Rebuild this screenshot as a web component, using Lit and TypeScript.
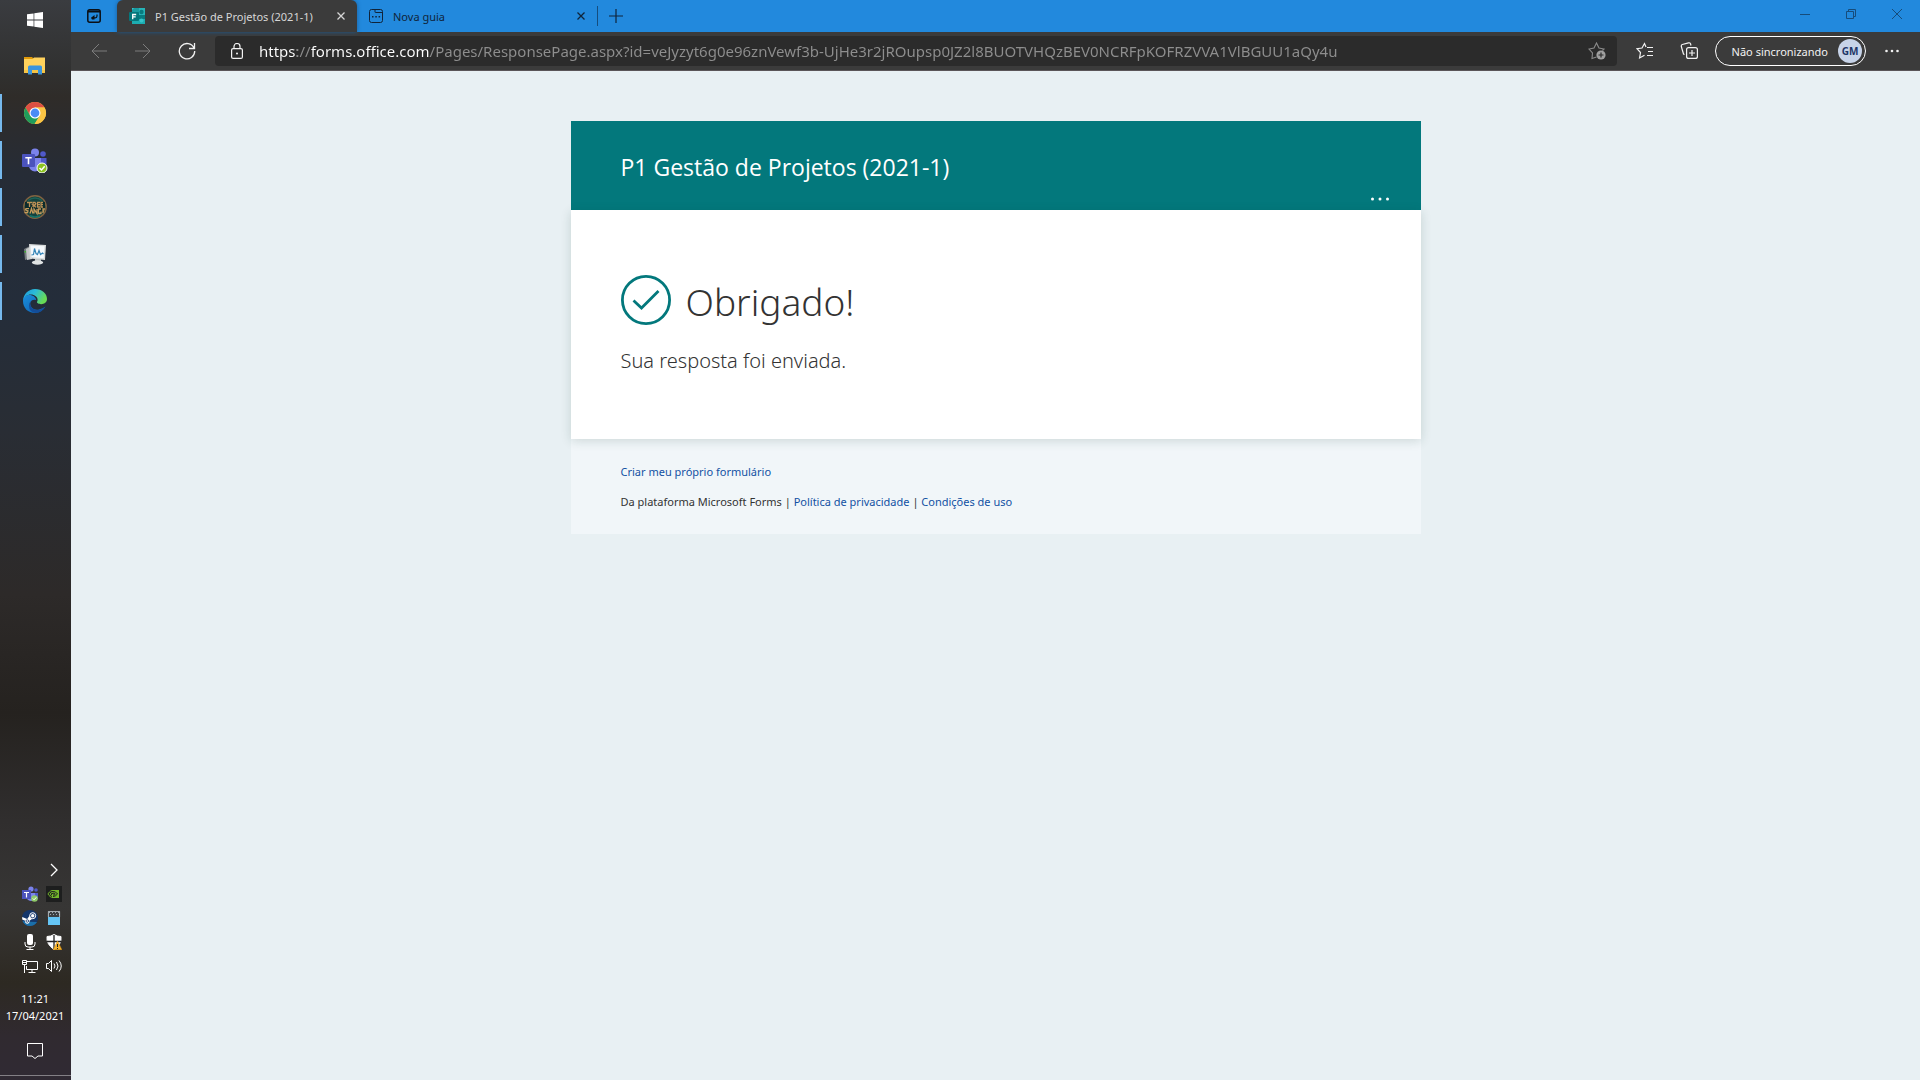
import { LitElement, html, css, svg } from "lit";
import { customElement, state } from "lit/decorators.js";
import { classMap } from "lit/directives/class-map.js";

const URL_TEXT =
  "https://forms.office.com/Pages/ResponsePage.aspx?id=veJyzyt6g0e96znVewf3b-UjHe3r2jROupsp0JZ2l8BUOTVHQzBEV0NCRFpKOFRZVVA1VlBGUU1aQy4u";

const icon = (size: number, body: unknown, width = size) =>
  html`<svg width=${width} height=${size} viewBox="0 0 ${width} ${size}" aria-hidden="true" fill="none" stroke="currentColor">${body}</svg>`;

const resets = css`
  * {
    box-sizing: border-box;
  }
  button {
    font: inherit;
    color: inherit;
    background: none;
    border: 0;
    padding: 0;
    display: flex;
    align-items: center;
    justify-content: center;
    flex: none;
  }
  svg {
    display: block;
    flex: none;
  }
`;

const icons = {
  start: icon(16, svg`<path stroke="none" fill="#fff" d="M0 2.300 6.600 1.400v6.200H0zM7.300 1.300 16 0v7.600H7.300zM0 8.400h6.600v6.200L0 13.700zM7.300 8.400H16V16l-8.700-1.300z"/>`),
  explorer: icon(22, svg`<g stroke="none"><path fill="#e09a0a" d="M0 2h8l2 2H0z"/><path fill="#ffd25c" d="M0 4h8.500l1.500-1.500H21V18H0z"/><path fill="#f6c445" d="M0 15h21v3H0z"/><path fill="#3b94dc" d="M4 12q0-1.500 1.500-1.500h11q1.500 0 1.500 1.500v7.500h-4V15H8v4.500H4z"/></g>`),
  chrome: icon(24, svg`<g stroke="none"><circle cx="12" cy="12" r="11" fill="#fbc544"/><path fill="#dd4f43" d="M2.470 6.500A11 11 0 0 1 21.530 6.500H12L7.240 14.750z"/><path fill="#1f9d5b" d="M2.470 6.500A11 11 0 0 0 11.600 23L16.760 14.750 12 17.500 7.240 14.750z"/><path fill="#fbc544" d="M21.530 6.500A11 11 0 0 1 11.600 23L16.760 14.750 12 6.500z"/><circle cx="12" cy="12" r="5.500" fill="#fff"/><circle cx="12" cy="12" r="4.400" fill="#4b8bf5"/></g>`),
  teams: icon(26, svg`<g stroke="none"><circle cx="21" cy="7" r="2.800" fill="#5059c9"/><path fill="#5059c9" d="M17 11h7.500v6.500a4 4 0 0 1-7.500 1z"/><circle cx="13" cy="5.600" r="4" fill="#7b83eb"/><path fill="#7b83eb" d="M7 11h12v7.500a6 6 0 0 1-12 0z"/><rect x="0" y="7" width="13" height="13" rx="1" fill="#4b53bc"/><path d="M3.300 10.700h6.400M6.500 10.700v6.500" stroke="#fff" stroke-width="1.600"/><circle cx="20" cy="21" r="5" fill="#8bc220" stroke="#fff" stroke-width="1"/><path d="m17.500 21 2 2 3.200-3.800" stroke="#fff" stroke-width="1.500" fill="none"/></g>`),
  game: icon(24, svg`<circle cx="12" cy="12" r="11.200" fill="#15423e" stroke="#806341" stroke-width="1.400"/><path d="M5 5.500q7-5 14 0" stroke="#1f6359" stroke-width="1.500"/><path fill="#0c2b2b" stroke="none" d="M2 7h20v10H2z"/><path stroke="#bd9257" stroke-width="1.300" d="M4 7.500h5M6.500 7.500V12M10 12V7.500h2l.8 1.300L12 10h-2l3 2.200M17 7.500h-2.500V12H17M14.500 9.700H17M20 7.500h-2V12h2M18 9.700h2"/><path stroke="#c59b5c" stroke-width="1.300" d="M1.500 17.500h3l.5-1.500-2.500-1 .5-1.300h3M7 18.500l1.500-5 1.500 5M11 18.500V14l3 4.500V14M18 14h-2.500v4.500H18v-2M22 14h-2v4M20 16h1.500"/><path stroke="#16736a" stroke-width="1.500" d="M7 20.800q5 2.200 10 0"/>`),
  monitor: icon(24, svg`<g stroke="none"><path fill="#777d80" d="m1 7 6-3 1 12-6 2z"/><path fill="#c4c8c8" d="m3 7 6-3v13l-5 1z"/><path fill="#3cb22c" d="M1.500 9H3v1.500H1.500z"/><path fill="#d9dcdc" d="m6 2 17 1-1 15-15-1.500z"/><path fill="#f5f9fc" d="m7.500 3.500 14 .8-.8 12-12.200-1.200z"/><path fill="#bfc5c5" d="M12 17h6v3h-6z"/><ellipse cx="14.500" cy="20.500" rx="5.700" ry="2.200" fill="#e0e3e3"/></g><path d="m8.500 13 2-.5 1-6 1.500 5 1.500 1 1.500-4 1.500 4 2-1.500 1 1" stroke="#3686b8" stroke-width="1.200"/>`),
  edge: icon(24, svg`<defs><linearGradient id="ea" x1="0" y1="0" x2="1" y2=".4"><stop stop-color="#1c96db"/><stop offset=".5" stop-color="#2bbbd8"/><stop offset="1" stop-color="#68dc55"/></linearGradient><linearGradient id="eb" x1="0" y1="0" x2="1" y2="1"><stop stop-color="#198edc"/><stop offset="1" stop-color="#0f5cad"/></linearGradient></defs><g stroke="none"><path fill="url(#eb)" d="M0 12C0 7 5 5 9 6.500q4 1.500 4 4.500-4-1-5.500 2c-1.500 3.500 2 9 8.500 7.500q4-1 6.500-3Q18.500 24 12 24C5 24 0 19 0 12z"/><path fill="#134d99" d="M8.500 11.500C5 15 9 21.500 15.500 21q4-.5 6.500-3-3 5.500-9 6Q6 23.500 6 16.500q0-3 2.500-5z"/><path fill="url(#ea)" d="M0 11.500C.5 5 5.500 0 12 0c7 0 12 4.500 12 10 0 5-6.500 6.500-9.500 4-1.200-1-.2-1.400.1-2.600C15 8 11.500 5.500 8 5.500c-4 0-7 2.300-8 6z"/></g>`),
  chevron: icon(14, svg`<path d="m4 1 6 6-6 6" stroke-width="1.300"/>`),
  trayTeams: icon(16, svg`<g stroke="none"><circle cx="14" cy="4" r="1.800" fill="#5059c9"/><path fill="#5059c9" d="M11 7h5v6h-4z"/><circle cx="9" cy="3" r="2.600" fill="#7b83eb"/><path fill="#7b83eb" d="M5 7h8v6q-4 4-8 0z"/><rect y="4" width="9" height="9" fill="#4b53bc"/><path d="M2 6.500h5M4.500 6.500v5" stroke="#fff" stroke-width="1.200"/><circle cx="12.500" cy="12.500" r="3.300" fill="#8fc96a"/><path d="m10.800 12.500 1.300 1.300 2.200-2.500" stroke="#fff" fill="none"/></g>`),
  nvidia: icon(16, svg`<rect width="16" height="16" fill="#1d1e1e" stroke="none"/><path fill="#74b72b" stroke="none" d="M6 4h7v8H6z"/><path stroke="#74b72b" d="M6 4.500C4 5 2.500 7 2 8c1 2 3 3.500 5 3.500M6 6.500Q4.500 7 4 8.200 5.500 10 7 10"/><path stroke="#1d1e1e" d="M6 5.500q4-.5 5.500 2.500Q9.500 10.500 7 10.500M6 7.500q2-.8 3.300.7Q8.500 9.300 7 9"/>`),
  steam: icon(16, svg`<circle cx="8" cy="8" r="8" fill="#14366b" stroke="none"/><path fill="#1b6fa9" stroke="none" d="M.500 11q7 1 14.500 1-2.500 4-7 4-5.500 0-7.500-5z"/><path fill="#fff" stroke="none" d="m.2 7 5 2 2.500-3.500 3 3-3.200 2.300a2.300 2.300 0 1 1-4.400 0L.2 9.500z"/><circle cx="10.700" cy="5.700" r="3" fill="#14366b" stroke="#fff" stroke-width="1"/><circle cx="10.700" cy="5.700" r="1.700" fill="#fff" stroke="none"/><circle cx="5.300" cy="11" r="1.300" fill="none" stroke="#14366b" stroke-width=".8"/>`),
  device: icon(14, svg`<g stroke="none"><path fill="#3c4043" d="M1 0h12v6H1z"/><path fill="#65c5f5" d="M1 6h12v8H1z"/></g><path stroke="#9aa7ad" stroke-dasharray="1 2" d="M2 1.500h11M3 3.500h10"/><path stroke="#cfd8dc" stroke-width=".8" d="M1.400 6V.4h11.200V6"/>`),
  mic: icon(16, svg`<rect x="5" y="0" width="6" height="11" rx="2" fill="#fff" stroke="none"/><path d="M3 8v2q0 3 3 3h4q3 0 3-3V8M8 13v2.500M4.500 15.500h7"/>`),
  shield: icon(16, svg`<path fill="#fff" stroke="#fff" d="M8 .5Q5 2.500 1 2.500 0 10 8 15.500 16 10 15 2.500 11 2.500 8 .5z"/><path d="M8 1v14M1 7.500h14" stroke="#222" stroke-width="1.300"/><path fill="#f7b52c" stroke="#e4940d" stroke-width=".5" d="m11.500 7 4.300 8.700H7.200z"/><path d="M11.500 10v3M11.500 14v1" stroke="#222"/>`),
  network: icon(16, svg`<path d="M5 3.500h10.500v8H4.500V8M10 11.500v3M6.500 14.500h7M2.500 8v7M.5 2.500h4v4h-4zM2.500 6.500V8M1 4.500h3"/>`),
  sound: icon(16, svg`<path d="M.5 5.500h2l3-3v11l-3-3h-2zM8 5.500q2 2.500 0 5M10.500 4q3 4 0 8M13 2.500q4.500 5.500 0 11"/>`),
  notice: icon(16, svg`<path d="M.5.500h15V13H11l-3 2.500L5 13H.5z"/>`),
  tabActions: icon(14, svg`<rect x=".8" y=".8" width="12.400" height="12.400" rx="2" stroke-width="1.500"/><path d="M1 2.500h12" stroke-width="2"/><path d="M10 5.500V7q0 1.800-1.800 1.800H5.500" stroke-width="1.200"/><path d="M4 8.800 7.500 6v4.500H5z" fill="currentColor" stroke="none"/>`),
  forms: icon(16, svg`<g stroke="none"><path fill="#37c6d0" d="M3 0h10v6H3z"/><path fill="#1a9ba1" d="M5 0h6v5H3V2z"/><path fill="#27b4b8" d="M10 0h6v7h-6z"/><circle cx="12.500" cy="4" r="2.200" fill="#087c80"/><path fill="#087c80" d="M9 7h7v4H9z"/><path fill="#1cadb1" d="M3 11h13v5H3z"/><circle cx="12.500" cy="12.500" r="2" fill="#36c4ca"/><rect y="4" width="10" height="9" rx="1" fill="#05777c"/><path d="M3.700 11.300V6.500h3.500M3.700 8.800h3" stroke="#fff" stroke-width="1.300"/></g>`),
  page: icon(14, svg`<rect x=".5" y=".5" width="13" height="13" rx="2"/><path d="M6 .5V3q0 .5.500.5h7"/><path stroke-width="1.500" d="M3 7.800h1.500M6.300 7.800h1.500M9.600 7.800h1.500"/>`),
  close: icon(8, svg`<path d="m.5.500 7 7m0-7-7 7" stroke-width="1.300"/>`),
  plus: icon(14, svg`<path d="M7 0v14M0 7h14" stroke-width="1.200"/>`),
  minimize: icon(10, svg`<path d="M0 5.500h10"/>`),
  restore: icon(10, svg`<path d="M.5 2.500h7v7h-7zM2.500 2.500v-2h7v7h-2"/>`),
  quit: icon(10, svg`<path d="m0 0 10 10M10 0 0 10"/>`),
  back: icon(16, svg`<path d="M16 8H1M8 1 1 8l7 7"/>`),
  forward: icon(16, svg`<path d="M0 8h15M8 1l7 7-7 7"/>`),
  reload: icon(18, svg`<path d="M16 6A7.700 7.700 0 1 0 16.700 9M16.500 1v5.500H11" stroke-width="1.300"/>`),
  lock: icon(16, svg`<rect x=".6" y="5.600" width="10.800" height="9.800" rx="1.500" stroke-width="1.200"/><path d="M3 5.500V3.500a3 3 0 0 1 6 0v2" stroke-width="1.200"/><circle cx="6" cy="10.500" r="1" fill="currentColor" stroke="none"/>`, 12),
  starAdd: icon(18, svg`<path d="M8.500 15 4 16.500l.5-5.500L1 7l5-1L8.500 1 11 6l5 1-1.500 1.500" stroke-width="1.100"/><circle cx="13" cy="13" r="4.600" fill="#a0a0a0" stroke="none"/><path stroke="#2b2b2b" stroke-width="1.200" d="M13 10.500v5M10.500 13h5"/>`),
  favorites: icon(18, svg`<path d="M11 5.500h6M12 9.500h5M11 13.500h6M10 5 8.500 1.500 6 6 1 6.700l3.500 3.800L3.600 16l4.900-2.700" stroke-width="1.200"/>`),
  collections: icon(18, svg`<rect x="6.600" y="5.600" width="10.800" height="10.800" rx="2" stroke-width="1.200"/><path d="M12 8v6M9 11h6" stroke-width="1.200"/><path d="m4.500 12.500-1-.5L1.300 4.500Q1 3 2.300 2.500L8.500.8q1.500-.3 2 1l.5 1.700" stroke-width="1.200"/>`),
  more: icon(14, svg`<g stroke="none" fill="currentColor"><circle cx="1.500" cy="7" r="1.300"/><circle cx="7" cy="7" r="1.300"/><circle cx="12.500" cy="7" r="1.300"/></g>`),
  formMore: icon(20, svg`<g stroke="none" fill="#fff"><circle cx="2.500" cy="9" r="1.500"/><circle cx="10" cy="9" r="1.500"/><circle cx="17.500" cy="9" r="1.500"/></g>`),
  done: icon(50, svg`<circle cx="25" cy="25" r="23.600" stroke-width="2.800"/><path d="m12.500 25.500 8 7.500L37.500 16" stroke-width="2.800"/>`),
};

@customElement("task-bar")
class TaskBar extends LitElement {
  static styles = [
    resets,
    css`
      :host {
        display: flex;
        flex-direction: column;
        color: #fff;
        background: linear-gradient(180deg, #3a3c40 0, #30302f 7%, #2f2c29 9%, #262c36 16%, #242d3a 28%, #292d34 40%, #2d2a29 55%, #25221f 66%, #302e2e 76%, #373635 84%, #2d2922 91%, #302a30 96%, #302a34 100%);
      }
      .start,
      .app,
      .clock,
      .notice {
        padding-right: 1px;
      }
      .start {
        height: 40px;
      }
      .apps {
        padding-top: 2px;
      }
      .app {
        position: relative;
        width: 100%;
        height: 47px;
      }
      .running::before {
        content: "";
        position: absolute;
        left: 0;
        top: 5px;
        bottom: 4px;
        width: 2px;
        background: #76b9ed;
      }
      .tray {
        margin-top: auto;
        display: grid;
        grid-template-columns: 24px 24px;
        grid-auto-rows: 24px;
        padding-left: 18px;
      }
      .more {
        grid-column: 2;
      }
      .clock {
        flex-direction: column;
        height: 57px;
        font-size: 11px;
        line-height: 17px;
      }
      .notice {
        height: 32px;
        margin-bottom: 8px;
      }
      .desktop {
        height: 5px;
        border-top: 1px solid #838086;
      }
    `,
  ];

  private apps = [
    { name: "Explorador de Arquivos", glyph: icons.explorer, running: false },
    { name: "Google Chrome", glyph: icons.chrome, running: true },
    { name: "Microsoft Teams", glyph: icons.teams, running: true },
    { name: "Tree of Savior", glyph: icons.game, running: true },
    { name: "Monitor de Recursos", glyph: icons.monitor, running: true },
    { name: "Microsoft Edge", glyph: icons.edge, running: true },
  ];

  private tray = [
    { name: "Teams", glyph: icons.trayTeams },
    { name: "NVIDIA", glyph: icons.nvidia },
    { name: "Steam", glyph: icons.steam },
    { name: "Dispositivo", glyph: icons.device },
    { name: "Microfone", glyph: icons.mic },
    { name: "Segurança", glyph: icons.shield },
    { name: "Rede", glyph: icons.network },
    { name: "Som", glyph: icons.sound },
  ];

  render() {
    return html`
      <button class="start" aria-label="Iniciar">${icons.start}</button>
      <div class="apps">
        ${this.apps.map(
          (a) => html`<button class=${classMap({ app: true, running: a.running })} aria-label=${a.name}>${a.glyph}</button>`
        )}
      </div>
      <div class="tray">
        <button class="more" aria-label="Mostrar ícones ocultos">${icons.chevron}</button>
        ${this.tray.map((t) => html`<button aria-label=${t.name}>${t.glyph}</button>`)}
      </div>
      <button class="clock"><span>11:21</span><span>17/04/2021</span></button>
      <button class="notice" aria-label="Notificações">${icons.notice}</button>
      <button class="desktop" aria-label="Mostrar área de trabalho"></button>
    `;
  }
}

@customElement("browser-chrome")
class BrowserChrome extends LitElement {
  static styles = [
    resets,
    css`
      :host {
        display: block;
        color: #f2f2f2;
      }
      .tabs {
        display: flex;
        height: 32px;
        background: #2289dd;
        color: #10243a;
        font-size: 11px;
      }
      .actions {
        width: 46px;
        color: #0b0f14;
      }
      .tab {
        display: flex;
        align-items: center;
        width: 240px;
        padding: 0 4px 0 12px;
      }
      .select {
        flex: 1;
        gap: 10px;
        justify-content: flex-start;
        white-space: nowrap;
        height: 32px;
      }
      .active {
        background: #3b3b3b;
        color: #d6d6d6;
        border-radius: 6px 6px 0 0;
        box-shadow: 0 0 4px #1b5d96;
      }
      .close {
        width: 24px;
        height: 24px;
      }
      .new {
        width: 36px;
        height: 20px;
        margin: 6px 0;
        border-left: 1px solid #154d7e;
      }
      .window {
        display: flex;
        margin-left: auto;
        color: #164c7b;
      }
      .window button {
        width: 46px;
        height: 28px;
      }
      .bar {
        display: flex;
        align-items: center;
        height: 39px;
        padding: 0 6px;
        background: #3b3b3b;
        border-bottom: 1px solid #5a5558;
      }
      .tool {
        width: 44px;
        height: 30px;
      }
      .off {
        color: #7d7d7d;
      }
      .address {
        flex: 1;
        display: flex;
        align-items: center;
        min-width: 0;
        height: 30px;
        margin: 0 6px;
        padding-left: 16px;
        background: #2b2b2b;
        border-radius: 4px;
      }
      .star {
        width: 40px;
        height: 30px;
        color: #8c8c8c;
      }
      .url {
        flex: 1;
        min-width: 0;
        height: 30px;
        margin-left: 16px;
        padding: 0;
        border: 0;
        outline: 0;
        font: inherit;
        font-size: 15px;
        color: transparent;
        caret-color: #fff;
        background: linear-gradient(90deg, #fff 0 38px, #8e8e8e 38px 52px, #fff 52px 171px, #8e8e8e 171px);
        -webkit-background-clip: text;
        background-clip: text;
      }
      .profile {
        gap: 10px;
        height: 30px;
        margin: 0 4px;
        padding: 0 3px 0 16px;
        border: 1px solid #fff;
        border-radius: 15px;
        font-size: 11px;
        white-space: nowrap;
      }
      .avatar {
        width: 24px;
        height: 24px;
        border-radius: 50%;
        background: #c7d3e8;
        color: #1d3566;
        font-size: 10px;
        font-weight: 700;
        line-height: 24px;
      }
    `,
  ];

  @state() private current = 0;

  private tabs = [
    { title: "P1 Gestão de Projetos (2021-1)", glyph: icons.forms },
    { title: "Nova guia", glyph: icons.page },
  ];

  render() {
    return html`
      <div class="tabs">
        <button class="actions" aria-label="Menu de guias">${icons.tabActions}</button>
        ${this.tabs.map(
          (t, i) => html`<div class=${classMap({ tab: true, active: i === this.current })}>
            <button class="select" @click=${() => (this.current = i)}>${t.glyph}<span>${t.title}</span></button>
            <button class="close" aria-label="Fechar guia">${icons.close}</button>
          </div>`
        )}
        <button class="new" aria-label="Nova guia">${icons.plus}</button>
        <div class="window">
          <button aria-label="Minimizar">${icons.minimize}</button>
          <button aria-label="Restaurar">${icons.restore}</button>
          <button aria-label="Fechar">${icons.quit}</button>
        </div>
      </div>
      <div class="bar">
        <button class="tool off" aria-label="Voltar">${icons.back}</button>
        <button class="tool off" aria-label="Avançar">${icons.forward}</button>
        <button class="tool" aria-label="Atualizar">${icons.reload}</button>
        <div class="address">
          ${icons.lock}
          <input class="url" type="text" aria-label="Endereço" spellcheck="false" .value=${URL_TEXT} />
          <button class="star" aria-label="Adicionar aos favoritos">${icons.starAdd}</button>
        </div>
        <button class="tool" aria-label="Favoritos">${icons.favorites}</button>
        <button class="tool" aria-label="Coleções">${icons.collections}</button>
        <button class="profile"><span>Não sincronizando</span><span class="avatar">GM</span></button>
        <button class="tool" aria-label="Configurações">${icons.more}</button>
      </div>
    `;
  }
}

@customElement("form-receipt")
class FormReceipt extends LitElement {
  static styles = [
    resets,
    css`
      :host {
        display: block;
        padding: 50px 24px;
        background: #e8f0f3;
      }
      .card {
        max-width: 850px;
        margin: 0 auto;
      }
      header {
        display: flex;
        align-items: flex-end;
        justify-content: space-between;
        padding: 30px 31px 0 50px;
        height: 89px;
        background: #03787c;
        color: #fff;
      }
      h1 {
        margin: 0 0 27px;
        font-family: "Open Sans", sans-serif;
        font-size: 23px;
        line-height: 32px;
        font-weight: 400;
      }
      .body {
        position: relative;
        padding: 60px 50px 63px;
        background: #fff;
        box-shadow: 0 2px 10px rgba(20, 60, 50, 0.16);
      }
      .thanks {
        display: flex;
        align-items: flex-start;
        gap: 15px;
        padding-top: 5px;
        color: #03787c;
      }
      h2 {
        margin: 0;
        font-size: 37px;
        line-height: 54px;
        font-weight: 350;
        color: #333;
      }
      p {
        margin: 0;
      }
      .sent {
        margin-top: 17px;
        font-size: 20px;
        line-height: 30px;
        font-weight: 350;
        color: #333;
      }
      footer {
        display: grid;
        gap: 10px;
        padding: 23px 50px 22px;
        background: #f1f6f9;
        font-size: 11px;
        line-height: 20px;
        color: #333;
      }
      a {
        color: #1251a3;
        text-decoration: none;
      }
    `,
  ];

  render() {
    return html`
      <main class="card">
        <header>
          <h1>P1 Gestão de Projetos (2021-1)</h1>
          <button aria-label="Mais opções">${icons.formMore}</button>
        </header>
        <section class="body">
          <div class="thanks">${icons.done}<h2>Obrigado!</h2></div>
          <p class="sent">Sua resposta foi enviada.</p>
        </section>
        <footer>
          <p><a href="#criar">Criar meu próprio formulário</a></p>
          <p>Da plataforma Microsoft Forms | <a href="#privacidade">Política de privacidade</a> | <a href="#uso">Condições de uso</a></p>
        </footer>
      </main>
    `;
  }
}

@customElement("app-root")
class AppRoot extends LitElement {
  static styles = css`
    :host {
      display: grid;
      grid-template-columns: 71px minmax(0, 1fr);
      grid-template-rows: auto 1fr;
      min-height: 100vh;
      font-family: "Segoe UI", "Noto Sans", "Open Sans", sans-serif;
    }
    task-bar {
      grid-row: 1 / 3;
    }
  `;

  render() {
    return html`<task-bar></task-bar><browser-chrome></browser-chrome><form-receipt></form-receipt>`;
  }
}
